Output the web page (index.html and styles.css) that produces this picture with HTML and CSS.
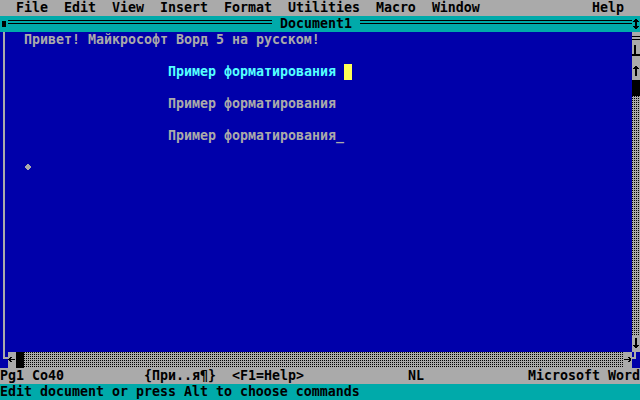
FILE: index.html
```html
<!DOCTYPE html>
<html lang="ru">
<head>
    <meta charset="UTF-8">
    <title>Microsoft Word</title>
    <link rel="stylesheet" href="styles.css">
</head>
<body>
    <div class="screen">
        <!-- top menu -->
        <div class="menubar">
            <span>File</span>
            <span>Edit</span>
            <span>View</span>
            <span>Insert</span>
            <span>Format</span>
            <span>Utilities</span>
            <span>Macro</span>
            <span>Window</span>
            <span class="menu-help">Help</span>
        </div>

        <!-- window title -->
        <div class="titlebar">
            <span class="tb-box"><i></i></span>
            <span class="tb-rule tb-rule-left"></span>
            <span class="tb-name">Document1</span>
            <span class="tb-rule"></span>
            <span class="tb-size">
                <svg width="8" height="16" viewBox="0 0 8 16" shape-rendering="crispEdges" fill="currentColor">
                    <rect x="3" y="3" width="2" height="1"/><rect x="2" y="4" width="4" height="1"/>
                    <rect x="1" y="5" width="6" height="1"/><rect x="3" y="6" width="2" height="4"/>
                    <rect x="1" y="10" width="6" height="1"/><rect x="2" y="11" width="4" height="1"/>
                    <rect x="3" y="12" width="2" height="1"/>
                </svg>
            </span>
        </div>

        <!-- document window -->
        <div class="window">
            <div class="edge"></div>
            <div class="doc">
                <p class="line">Привет! Майкрософт Ворд 5 на русском!</p>
                <p class="line indent hl">Пример форматирования <span class="cursor"></span></p>
                <p class="line indent">Пример форматирования</p>
                <p class="line indent">Пример форматирования_</p>
                <div class="line end-line">
                    <svg width="8" height="16" viewBox="0 0 8 16" shape-rendering="crispEdges" fill="currentColor">
                        <rect x="3" y="4" width="2" height="1"/><rect x="2" y="5" width="4" height="1"/>
                        <rect x="1" y="6" width="6" height="2"/><rect x="2" y="8" width="4" height="1"/>
                        <rect x="3" y="9" width="2" height="1"/>
                    </svg>
                </div>
            </div>
            <div class="vscroll">
                <svg width="8" height="32" viewBox="0 0 8 32" shape-rendering="crispEdges" fill="currentColor">
                    <rect x="0" y="4" width="8" height="1"/><rect x="0" y="7" width="8" height="1"/>
                    <rect x="2" y="13" width="2" height="9"/><rect x="0" y="22" width="8" height="2"/>
                </svg>
                <svg width="8" height="16" viewBox="0 0 8 16" shape-rendering="crispEdges" fill="currentColor">
                    <rect x="3" y="2" width="2" height="1"/><rect x="2" y="3" width="4" height="1"/>
                    <rect x="1" y="4" width="6" height="1"/><rect x="3" y="5" width="2" height="7"/>
                </svg>
                <div class="thumb"></div>
                <div class="track"></div>
                <svg width="8" height="16" viewBox="0 0 8 16" shape-rendering="crispEdges" fill="currentColor">
                    <rect x="3" y="2" width="2" height="7"/><rect x="1" y="9" width="6" height="1"/>
                    <rect x="2" y="10" width="4" height="1"/><rect x="3" y="11" width="2" height="1"/>
                </svg>
            </div>
        </div>

        <!-- horizontal scroll -->
        <div class="hscroll">
            <svg class="corner" width="8" height="16" viewBox="0 0 8 16" shape-rendering="crispEdges" fill="#aaaaaa">
                <rect x="3" y="0" width="2" height="7"/><rect x="3" y="5" width="5" height="2"/>
            </svg>
            <svg class="arrow" width="8" height="16" viewBox="0 0 8 16" shape-rendering="crispEdges" fill="currentColor">
                <rect x="2" y="5" width="2" height="1"/><rect x="1" y="6" width="2" height="1"/>
                <rect x="0" y="7" width="7" height="1"/><rect x="1" y="8" width="2" height="1"/>
                <rect x="2" y="9" width="2" height="1"/>
            </svg>
            <div class="thumb"></div>
            <div class="track"></div>
            <svg class="arrow" width="8" height="16" viewBox="0 0 8 16" shape-rendering="crispEdges" fill="currentColor">
                <rect x="4" y="5" width="2" height="1"/><rect x="5" y="6" width="2" height="1"/>
                <rect x="0" y="7" width="7" height="1"/><rect x="5" y="8" width="2" height="1"/>
                <rect x="4" y="9" width="2" height="1"/>
            </svg>
            <svg class="corner" width="8" height="16" viewBox="0 0 8 16" shape-rendering="crispEdges" fill="#aaaaaa">
                <rect x="2" y="0" width="2" height="7"/><rect x="0" y="5" width="4" height="2"/>
            </svg>
        </div>

        <!-- status line -->
        <div class="status">
            <span class="st-pos">Pg1 Co40</span>
            <span class="st-style">{При..я¶}</span>
            <span class="st-help">&lt;F1=Help&gt;</span>
            <span class="st-mode">NL</span>
            <span class="st-app">Microsoft Word</span>
        </div>

        <div class="message">Edit document or press Alt to choose commands</div>
    </div>
</body>
</html>
```

FILE: styles.css
```css
* {
    box-sizing: border-box;
    margin: 0;
    padding: 0;
}

body {
    margin: 0;
    background: #000;
    font-family: "DejaVu Sans Mono", "Liberation Mono", monospace;
    font-size: 13.29px; /* 8px per character cell */
    font-weight: bold;
    line-height: 16px;
}

svg {
    display: block;
}

.screen {
    width: 640px;
    height: 400px;
    display: flex;
    flex-direction: column;
    overflow: hidden;
}

/* menu bar */
.menubar {
    display: flex;
    gap: 16px;
    height: 16px;
    padding: 0 16px;
    background: #aaaaaa;
    color: #000;
    white-space: pre;
}

.menu-help {
    margin-left: auto;
}

/* title bar */
.titlebar {
    display: flex;
    height: 16px;
    background: #00aaaa;
    color: #000;
}

.tb-box {
    width: 8px;
}

.tb-box i {
    display: block;
    width: 4px;
    height: 6px;
    margin: 5px 0 0 2px;
    background: #000;
}

.tb-rule {
    flex: 1;
    height: 16px;
    background:
        linear-gradient(#000, #000) 0 4px / 100% 1px no-repeat,
        linear-gradient(#000, #000) 0 7px / 100% 1px no-repeat;
}

.tb-rule-left {
    flex: none;
    width: 264px;
}

.tb-name {
    width: 88px;
    padding: 0 8px;
    white-space: pre;
}

.tb-size {
    width: 8px;
}

/* document area */
.window {
    display: flex;
    height: 320px;
    background: #0000aa;
}

.edge {
    width: 8px;
    background: linear-gradient(90deg, transparent 3px, #aaaaaa 3px, #aaaaaa 5px, transparent 5px);
}

.doc {
    flex: 1;
    display: flex;
    flex-direction: column;
    gap: 16px;
    padding-left: 16px;
    color: #aaaaaa;
    white-space: pre;
}

.line {
    height: 16px;
}

.end-line {
    white-space: normal;
}

.indent {
    margin-left: 144px;
}

.hl {
    color: #55ffff;
}

.cursor {
    display: inline-block;
    width: 8px;
    height: 16px;
    background: #ffff55;
    vertical-align: top;
}

/* scroll bars */
.vscroll {
    width: 8px;
    display: flex;
    flex-direction: column;
    background: #aaaaaa;
    color: #000;
}

.thumb {
    width: 8px;
    height: 16px;
    background: #000;
}

.track {
    flex: 1;
    background:
        linear-gradient(90deg, transparent 1px, #aaaaaa 1px) 0 0 / 2px 2px,
        linear-gradient(transparent 1px, #aaaaaa 1px) 0 0 / 2px 2px,
        #000;
}

.hscroll {
    display: flex;
    height: 16px;
    background: #aaaaaa;
    color: #000;
}

.corner {
    background: #0000aa;
}

/* status + message line */
.status {
    display: flex;
    height: 16px;
    background: #aaaaaa;
    color: #000;
    white-space: pre;
}

.st-pos {
    width: 144px;
}

.st-style {
    width: 88px;
}

.st-help {
    width: 176px;
}

.st-mode {
    width: 120px;
}

.message {
    height: 16px;
    background: #00aaaa;
    color: #000;
    white-space: pre;
}
```
